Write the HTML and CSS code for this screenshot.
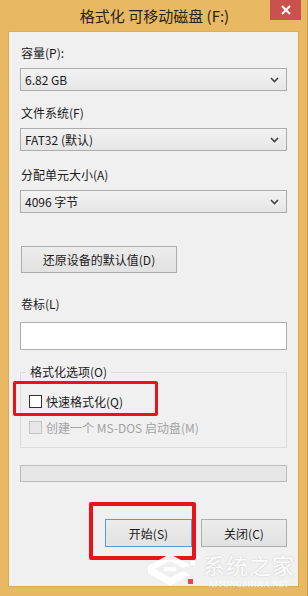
FILE: index.html
```html
<!DOCTYPE html>
<html lang="zh-CN">
<head>
<meta charset="utf-8">
<title>格式化 可移动磁盘 (F:)</title>
<link rel="stylesheet" href="styles.css">
</head>
<body>
<div class="window">
  <div class="titlebar">
    <span class="title">格式化 可移动磁盘 (F:)</span>
    <div class="close">
      <svg width="12" height="10" viewBox="0 0 12 10"><path d="M2 1 L10 9 M10 1 L2 9" stroke="#fff" stroke-width="2" fill="none"/></svg>
    </div>
  </div>
  <div class="panel">
    <div class="label l1">容量(P):</div>
    <div class="select"><span>6.82 GB</span><svg class="chev" width="9" height="6" viewBox="0 0 9 6"><path d="M1 1 L4.5 4.5 L8 1" stroke="#404040" stroke-width="1.6" fill="none"/></svg></div>
    <div class="label l2">文件系统(F)</div>
    <div class="select"><span>FAT32 (默认)</span><svg class="chev" width="9" height="6" viewBox="0 0 9 6"><path d="M1 1 L4.5 4.5 L8 1" stroke="#404040" stroke-width="1.6" fill="none"/></svg></div>
    <div class="label l3">分配单元大小(A)</div>
    <div class="select"><span>4096 字节</span><svg class="chev" width="9" height="6" viewBox="0 0 9 6"><path d="M1 1 L4.5 4.5 L8 1" stroke="#404040" stroke-width="1.6" fill="none"/></svg></div>
    <div class="btn restore">还原设备的默认值(D)</div>
    <div class="label l4">卷标(L)</div>
    <div class="input"></div>
    <div class="group">
      <div class="legend">格式化选项(O)</div>
      <div class="check c1"><span class="box"></span><span>快速格式化(Q)</span></div>
      <div class="check c2 disabled"><span class="box"></span><span>创建一个 MS-DOS 启动盘(M)</span></div>
      <div class="mark mark1"></div>
    </div>
    <div class="progress"></div>
    <div class="actions">
      <div class="btn action default">开始(S)<div class="mark mark2"></div></div>
      <div class="btn action">关闭(C)</div>
    </div>
  </div>
  <div class="watermark">
    <svg class="logo" width="56" height="38" viewBox="0 0 56 38">
      <g fill="rgba(255,255,255,0.92)">
        <path d="M24 2 L44 13 L37 16 L24 9 L9 17 L24 26 L37 19 L44 23 L24 34 L2 21 L2 14 Z"/>
        <path d="M18 15 L30 15 L30 19 L18 19 Z"/>
        <path d="M45 9 L49 9 L49 13 L45 13 Z"/>
        <path d="M50 4 L53 4 L53 7 L50 7 Z"/>
      </g>
      <rect x="42" y="27" width="5" height="5" fill="rgba(230,40,40,0.85)"/>
    </svg>
    <div class="wmtext">
      <div class="wmcn">系统之家</div>
      <div class="wmen">XITONGZHIJIA.NET</div>
    </div>
  </div>
</div>
</body>
</html>
```

FILE: styles.css
```css
* { box-sizing: border-box; }
html, body { margin: 0; padding: 0; }
body {
  width: 308px;
  height: 596px;
  background: #e8b862;
  font-family: "Noto Sans CJK SC", "Noto Sans", sans-serif;
  font-size: 12px;
  color: #1a1a1a;
  overflow: hidden;
}
.window {
  position: relative;
  width: 308px;
  height: 596px;
  background: #e8b862;
  border-right: 1px solid #c99a48;
  display: flex;
  flex-direction: column;
}
.titlebar {
  height: 31px;
  display: flex;
  align-items: center;
  justify-content: center;
  position: relative;
}
.title {
  font-size: 15px;
  color: #2a2218;
  margin-top: -1px;
  padding-left: 2px;
}
.close {
  position: absolute;
  top: 0;
  left: 270px;
  width: 31px;
  height: 20px;
  background: #c9524f;
  display: flex;
  align-items: center;
  justify-content: center;
}
.panel {
  position: relative;
  margin: 0 8px 0 8px;
  width: 291px;
  height: 556px;
  background: #f0f0f0;
  border: 1px solid #d9a850;
  border-top-color: #dcae5c;
  padding: 0 11px 0 11px;
  display: flex;
  flex-direction: column;
}
.label {
  height: 16px;
  line-height: 16px;
  padding-left: 1px;
}
.l1 { margin-top: 13px; }
.l2 { margin-top: 14px; }
.l3 { margin-top: 16px; }
.l4 { margin-top: 23px; }
.select {
  height: 23px;
  margin-top: 7px;
  border: 1px solid #acacac;
  background: linear-gradient(#f2f2f2, #e6e6e6);
  display: flex;
  align-items: center;
  justify-content: space-between;
  padding: 0 7px 0 4px;
}
.select span { line-height: 16px; }
.btn {
  border: 1px solid #adadad;
  background: linear-gradient(#ececec, #e2e2e2);
  display: flex;
  align-items: center;
  justify-content: center;
}
.restore {
  width: 156px;
  height: 27px;
  margin-top: 33px;
  margin-left: 1px;
}
.input {
  height: 28px;
  margin-top: 10px;
  border: 1px solid #abadb3;
  background: #fff;
}
.group {
  position: relative;
  margin-top: 22px;
  height: 76px;
  border: 1px solid #dcdcdc;
  padding: 0 0 0 8px;
}
.legend {
  position: absolute;
  top: -9px;
  left: 5px;
  padding: 0 4px;
  background: #f0f0f0;
  line-height: 16px;
}
.check {
  display: flex;
  align-items: center;
  gap: 4px;
  height: 16px;
}
.c1 { margin-top: 20px; }
.c2 { margin-top: 10px; }
.box {
  width: 13px;
  height: 13px;
  border: 1px solid #333;
  background: #fff;
}
.disabled { color: #a3a3a3; }
.disabled .box { border-color: #c4c4c4; background: #e6e6e6; }
.mark {
  position: absolute;
  border: 3px solid #e8141c;
  border-radius: 2px;
  pointer-events: none;
}
.mark1 { left: -8px; top: 8px; width: 145px; height: 35px; }
.progress {
  margin-top: 17px;
  height: 17px;
  border: 1px solid #bcbcbc;
  background: #e6e6e6;
}
.actions {
  margin-top: 37px;
  display: flex;
  justify-content: flex-end;
  gap: 9px;
}
.action {
  position: relative;
  width: 86px;
  height: 28px;
}
.default {
  width: 87px;
  border-color: #5b9bd0;
}
.mark2 { left: -17px; top: -18px; width: 107px; height: 58px; border-width: 4px; }
.watermark {
  position: absolute;
  left: 146px;
  top: 552px;
  display: flex;
  align-items: flex-start;
  gap: 1px;
  pointer-events: none;
}
.wmtext {
  display: flex;
  flex-direction: column;
  align-items: center;
  gap: 4px;
}
.wmcn {
  font-size: 22px;
  line-height: 24px;
  color: rgba(255,255,255,0.95);
  letter-spacing: 1px;
  text-shadow: 0 0 2px rgba(120,120,120,0.35);
}
.wmen {
  font-family: "Liberation Serif", serif;
  font-size: 8px;
  line-height: 9px;
  color: rgba(255,255,255,0.9);
  letter-spacing: 0.5px;
}
```
